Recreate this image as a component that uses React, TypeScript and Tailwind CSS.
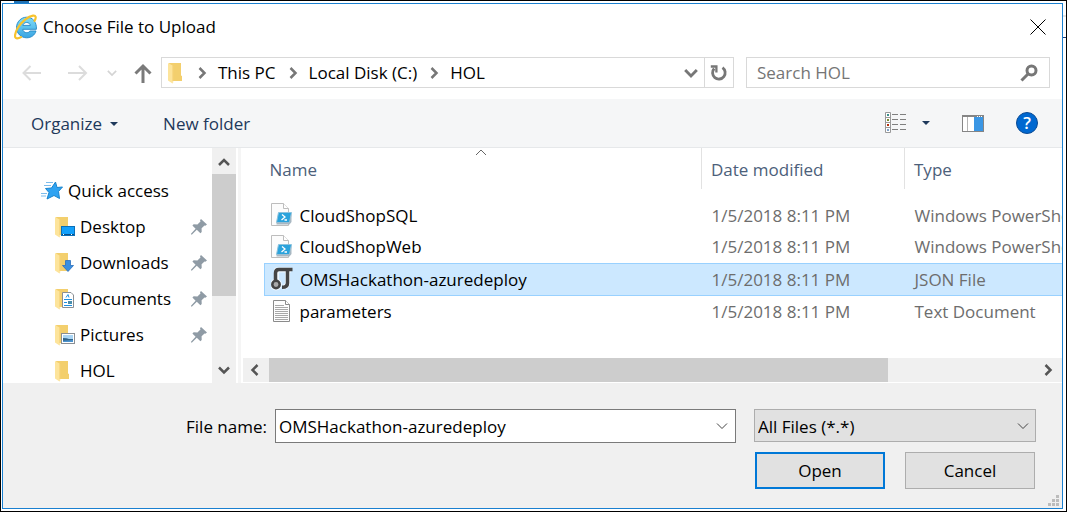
import type { ReactNode } from "react";

type Kind = "ps" | "json" | "txt";

const files: { name: string; date: string; type: string; kind: Kind; selected?: boolean }[] = [
  { name: "CloudShopSQL", date: "1/5/2018 8:11 PM", type: "Windows PowerShell Script", kind: "ps" },
  { name: "CloudShopWeb", date: "1/5/2018 8:11 PM", type: "Windows PowerShell Script", kind: "ps" },
  { name: "OMSHackathon-azuredeploy", date: "1/5/2018 8:11 PM", type: "JSON File", kind: "json", selected: true },
  { name: "parameters", date: "1/5/2018 8:11 PM", type: "Text Document", kind: "txt" },
];

function Chevron({ dir, className }: { dir: "up" | "down" | "left" | "right"; className: string }) {
  const d = {
    up: "M1 9 L6 4 L11 9",
    down: "M1 3.5 L6 8.5 L11 3.5",
    left: "M8.5 1 L3.5 6 L8.5 11",
    right: "M3.5 1 L8.5 6 L3.5 11",
  }[dir];
  return (
    <svg viewBox="0 0 12 12" fill="none" stroke="currentColor" className={className} aria-hidden="true">
      <path d={d} />
    </svg>
  );
}

function Caret() {
  return (
    <svg viewBox="0 0 8 4" className="h-1 w-2 shrink-0" aria-hidden="true">
      <path d="M0 0H8L4 4Z" fill="#1e395b" />
    </svg>
  );
}

function IeLogo() {
  return (
    <svg viewBox="0 0 24 26" className="h-[26px] w-6 shrink-0" aria-hidden="true">
      <defs>
        <linearGradient id="ie" x1="0" y1="0" x2="0" y2="1">
          <stop offset="0" stopColor="#7fdcf8" />
          <stop offset="1" stopColor="#3aa5e2" />
        </linearGradient>
      </defs>
      <path
        d="M12.600 3.200C7.200 3.200 2.500 7.800 2.500 13.500C2.500 19.500 7.200 23.800 12.700 23.800C17.200 23.800 20.800 21.200 22 17H15.800C15.200 18.200 14.200 18.700 12.800 18.700C10.500 18.700 9 17.300 8.800 15.300H22.400C22.900 8.200 18.800 3.200 12.600 3.200ZM8.900 11.400C9.200 9.700 10.600 8.500 12.700 8.500C14.700 8.500 16 9.700 16.300 11.400Z"
        fill="url(#ie)"
        stroke="#2186c4"
        strokeWidth="0.9"
      />
      <path
        d="M20.600 6.800C22.500 3.400 21.900 1.200 19 1.600C14.500 2.200 7.500 7.500 3.600 14.200C0.600 19.400 0 24.200 3 24.400C4.200 24.500 5.600 24 7 23.100"
        fill="none"
        stroke="#f7c32e"
        strokeWidth="2.200"
        strokeLinecap="round"
      />
    </svg>
  );
}

function Folder({ children }: { children?: ReactNode }) {
  return (
    <svg viewBox="0 0 21 22" className="h-[22px] w-[21px] shrink-0" aria-hidden="true">
      <path d="M1 1H13V13.500L14 14V19H4Z" fill="#f3cf6d" />
      <path d="M0 1L4.500 3.500V21.500L0 18.500Z" fill="#fde49b" />
      <path d="M4.500 3.500L5.200 4V20.500L4.500 21.500Z" fill="#f8d880" />
      {children}
    </svg>
  );
}

const desktopBadge = (
  <>
    <rect x="6.500" y="10.500" width="13" height="9" fill="#12a0fb" stroke="#0b6fb8" />
    <path d="M7 18.500H19" stroke="#0a4f88" />
    <path d="M8 18.500H9M16 18.500H17" stroke="#fff" />
  </>
);
const downloadBadge = <path d="M10.500 8.500H15.500V13.500H18.500L13 19.500L7.500 13.500H10.500Z" fill="#3a8fe0" stroke="#2a6fbd" strokeWidth="0.8" />;
const documentBadge = (
  <>
    <path d="M7.500 4.500H16L18.500 7V19.500H7.500Z" fill="#fff" stroke="#8a8f94" />
    <path d="M11 9.500L13 6.500L14 9.500M9 11.500H17M9 14.500H12M9 17.500H17" stroke="#1d8fe0" fill="none" />
    <rect x="13" y="13" width="4" height="3" fill="#4a8dab" />
  </>
);
const pictureBadge = (
  <>
    <rect x="6.500" y="9.500" width="13" height="10" fill="#fff" stroke="#8a8f94" />
    <rect x="8" y="11" width="10" height="7" fill="#a9d5f5" />
    <path d="M8 14Q12 14 14 15H18V18H8Z" fill="#33658a" />
    <path d="M8 16.800L18 16V18H8Z" fill="#4d94cf" />
  </>
);

function Pin() {
  return (
    <svg viewBox="0 0 16 16" className="h-4 w-4 shrink-0" aria-hidden="true">
      <path d="M10 0L16 5.500L14.300 6.800L13.500 6.400L10.600 9.300L10.700 13L9.400 14.200L5.800 10.800L1 15.500H0V14.700L4.600 9.700L1.400 6.500L2.700 5.200L6.400 5.500L9.500 2.500L9 1.200Z" fill="#8f9ba5" />
    </svg>
  );
}

const folders = [
  { name: "Desktop", badge: desktopBadge, pinned: true },
  { name: "Downloads", badge: downloadBadge, pinned: true },
  { name: "Documents", badge: documentBadge, pinned: true },
  { name: "Pictures", badge: pictureBadge, pinned: true },
  { name: "HOL", badge: null, pinned: false },
];

function FileIcon({ kind }: { kind: Kind }) {
  return (
    <svg viewBox="0 0 22 24" className="h-6 w-[22px] shrink-0" aria-hidden="true">
      {kind === "ps" && (
        <>
          <path d="M0.500 0.500H12.500L17.500 5.500V22.500H0.500Z" fill="#fcfcfc" stroke="#bdbdbd" />
          <path d="M12.500 0.500V5.500H17.500" fill="#fff" stroke="#bdbdbd" />
          <path d="M7.500 9.500H20.500L18.500 19.500H5.500Z" fill="#2ba3dc" stroke="#8cc3de" />
          <path d="M5.500 19.500H18.500L20.500 10V19L18.500 21.500H5.500Z" fill="#a8b7c2" />
          <path d="M11 11.500L14 14L10.500 17M13.500 17H16" fill="none" stroke="#fff" strokeWidth="1.300" />
        </>
      )}
      {kind === "json" && (
        <>
          <g fill="none" stroke="#fff" strokeWidth="5" opacity="0.7" strokeLinejoin="round">
            <path d="M5.500 13V3H20M16.500 3V15Q16.500 20 12 20" />
            <circle cx="5" cy="17.500" r="3.500" />
          </g>
          <g fill="none" stroke="#454545">
            <path d="M4.500 14V6Q4.500 2.500 8 2.500H21.500" strokeWidth="3.500" />
            <path d="M16.500 3V16Q16.500 20.300 11 20.300" strokeWidth="3.500" />
            <circle cx="5" cy="17.500" r="3.700" strokeWidth="2.500" fill="#aaa" />
          </g>
        </>
      )}
      {kind === "txt" && (
        <>
          <path d="M2.500 1.500H14.500L18.500 5.500V22.500H2.500Z" fill="#fdfdfd" stroke="#8b8b8b" />
          <path d="M14.500 1.500V5.500H18.500" fill="#fff" stroke="#8b8b8b" />
          <path d="M4 6.500H13M4 8.500H17M4 10.500H17M4 12.500H17M4 14.500H17M4 16.500H17M4 18.500H17M4 20.500H17" stroke="#a8a8a8" />
        </>
      )}
    </svg>
  );
}

export default function App() {
  return (
    <div className="relative h-screen border border-black bg-white py-[2px] pr-[3px] pl-px font-['Open_Sans','Noto_Sans',sans-serif] text-[17px] leading-6 text-black">
      <div className="absolute top-0 left-[13px] h-[2px] w-[15px] bg-[#2272b4]" aria-hidden="true" />
      <div className="absolute top-9 right-0 h-px w-[3px] bg-[#1f3f7a]" aria-hidden="true" />
      <div className="absolute top-[14px] right-0 h-[2px] w-[3px] bg-[#e5e5e5]" aria-hidden="true" />
      <div className="flex h-full flex-col border border-[#1a80d0] bg-white">
        <header className="flex h-11 items-center pt-[2px] pr-4 pl-[11px]">
          <IeLogo />
          <h1 className="ml-[5px] flex-1">Choose File to Upload</h1>
          <button aria-label="Close">
            <svg viewBox="0 0 16 16" className="h-4 w-4" stroke="#000" aria-hidden="true">
              <path d="M0.500 0.500L15.500 15.500M15.500 0.500L0.500 15.500" />
            </svg>
          </button>
        </header>

        <nav className="flex items-center pt-[9px] pr-3 pb-[11px] pl-[19px]">
          <button aria-label="Back" className="text-[#dcdcdc]">
            <svg viewBox="0 0 20 16" className="h-4 w-5" fill="none" stroke="currentColor" strokeWidth="2" aria-hidden="true">
              <path d="M19 8H1.500M8.500 1L1.500 8L8.500 15" />
            </svg>
          </button>
          <button aria-label="Forward" className="ml-[26px] text-[#dcdcdc]">
            <svg viewBox="0 0 20 16" className="h-4 w-5" fill="none" stroke="currentColor" strokeWidth="2" aria-hidden="true">
              <path d="M0 8H18M11 1L18 8L11 15" />
            </svg>
          </button>
          <button aria-label="Recent locations" className="ml-[19px] text-[#d4d4d4]">
            <Chevron dir="down" className="h-[10px] w-[10px] stroke-2" />
          </button>
          <button aria-label="Up" className="ml-[17px] text-[#7a7a7a]">
            <svg viewBox="0 0 18 20" className="h-5 w-[18px]" fill="none" stroke="currentColor" strokeWidth="3" aria-hidden="true">
              <path d="M9 20V3M1.500 10.500L9 3L16.500 10.500" />
            </svg>
          </button>
          <div className="ml-[9px] flex h-[31px] min-w-0 flex-1 items-center border border-[#d9d9d9] pl-[6px]">
            <Folder />
            <Chevron dir="right" className="ml-[7px] h-3 w-3 stroke-[2.5] text-[#777]" />
            <a href="#pc" className="ml-[10px]">This PC</a>
            <Chevron dir="right" className="ml-[11px] h-3 w-3 stroke-[2.5] text-[#777]" />
            <a href="#c" className="ml-[10px]">Local Disk (C:)</a>
            <Chevron dir="right" className="ml-[11px] h-3 w-3 stroke-[2.5] text-[#777]" />
            <a href="#hol" className="ml-[10px] flex-1">HOL</a>
            <button aria-label="Previous locations" className="mr-[6px] text-[#777]">
              <Chevron dir="down" className="h-[14px] w-[14px] stroke-[2.5]" />
            </button>
            <button aria-label="Refresh" className="flex h-full w-[29px] items-center justify-center border-l border-[#d9d9d9]">
              <svg viewBox="0 0 18 18" className="h-[18px] w-[18px]" fill="none" stroke="#777" strokeWidth="2.800" aria-hidden="true">
                <path d="M4.200 4.500A6.300 6.300 0 1 0 12.500 3.600" />
                <path d="M0.800 2.500H6.400V8.500" strokeWidth="2.300" />
              </svg>
            </button>
          </div>
          <div className="ml-3 flex h-[31px] w-[304px] items-center border border-[#d9d9d9] pr-[11px] pl-[10px]">
            <input aria-label="Search HOL" placeholder="Search HOL" className="min-w-0 flex-1 bg-transparent outline-none placeholder:text-[#757575]" />
            <svg viewBox="0 0 18 18" className="h-[18px] w-[18px]" fill="none" stroke="#777" strokeWidth="3" aria-hidden="true">
              <circle cx="11.500" cy="6.500" r="4.500" />
              <path d="M8 10L1.500 16.500" />
            </svg>
          </div>
        </nav>

        <div className="flex h-[49px] shrink-0 items-center border-b border-[#e6e8ea] bg-[#f5f6f7] pr-6 pl-7 text-[#1e395b]">
          <button className="flex items-center gap-2 pt-px">Organize <Caret /></button>
          <button className="ml-[45px] pt-px">New folder</button>
          <button aria-label="Change view" className="ml-auto flex items-center gap-4">
            <svg viewBox="0 0 22 22" className="h-[22px] w-[22px]" aria-hidden="true">
              <path d="M1.500 0.500H6.500V20.500H1.500ZM1.500 5.500H6.500M1.500 10.500H6.500M1.500 15.500H6.500" fill="#fff" stroke="#999" />
              <path d="M3 3H5" stroke="#3c8f8a" strokeWidth="2" />
              <path d="M3 8H5" stroke="#7a8c2f" strokeWidth="2" />
              <path d="M3 13H5" stroke="#b5310c" strokeWidth="2" />
              <path d="M3 18H5" stroke="#7fa3c8" strokeWidth="2" />
              <path d="M8 2.500H14M16 2.500H22M8 7.500H14M16 7.500H22M8 12.500H14M16 12.500H22M8 17.500H14M16 17.500H22" stroke="#7f7f7f" />
            </svg>
            <Caret />
          </button>
          <button aria-label="Preview pane" className="ml-8">
            <svg viewBox="0 0 22 17" className="h-[17px] w-[22px]" aria-hidden="true">
              <rect x="0.500" y="0.500" width="21" height="16" fill="#fff" stroke="#858585" />
              <path d="M1 1.500H21" stroke="#858585" />
              <path d="M15 1.500H16M17 1.500H18M19 1.500H20" stroke="#fff" />
              <path d="M5.500 2V16" stroke="#b5b5b5" />
              <rect x="12" y="2" width="9" height="14" fill="#3a96e4" />
            </svg>
          </button>
          <button aria-label="Help" className="ml-8 flex h-[22px] w-[22px] items-center justify-center rounded-full border border-[#0a4a94] bg-[#0068d0] font-semibold text-white">
            ?
          </button>
        </div>

        <main className="flex min-h-0 flex-1">
          <aside className="w-[209px] shrink-0 overflow-hidden pt-[25px]">
            <a href="#quick" className="flex h-9 items-center pl-[38px]">
              <svg viewBox="0 0 22 20" className="h-5 w-[22px] shrink-0" aria-hidden="true">
                <path d="M14.500 1L16 6.500L21.500 6L17.500 10.500L18.500 17.500L13 14.500L6 18L8 11.500L4.500 7.500L10.500 7Z" fill="#2fa3f2" stroke="#1a84cc" strokeLinejoin="round" />
                <path d="M5 1.500H12M3 4.500H10M0 12.500H6M0 15H5" stroke="#7cbcec" />
              </svg>
              <span className="ml-[5px]">Quick access</span>
            </a>
            {folders.map((f) => (
              <a key={f.name} href={`#${f.name}`} className="flex h-9 items-center pr-[5px] pl-[52px]">
                <Folder>{f.badge}</Folder>
                <span className="ml-1 flex-1">{f.name}</span>
                {f.pinned && <Pin />}
              </a>
            ))}
          </aside>
          <div className="flex w-6 shrink-0 flex-col items-center bg-[#f0f0f0] text-[#555]">
            <div className="flex h-[26px] items-center pt-px">
              <Chevron dir="up" className="h-3 w-3 stroke-[2.5]" />
            </div>
            <div className="w-full flex-[122] bg-[#cdcdcd]" />
            <div className="flex min-h-0 flex-[87] basis-0 items-end">
              <Chevron dir="down" className="mb-[7px] h-3 w-3 stroke-[2.5]" />
            </div>
          </div>
          <div className="ml-[2px] w-[3px] shrink-0 bg-[#f5f5f5]" />

          <section className="flex min-w-0 flex-1 flex-col">
            <div className="min-h-0 flex-1 overflow-hidden pl-[23px]">
              <table className="w-[115%] table-fixed border-collapse text-left whitespace-nowrap">
                <colgroup>
                  <col className="w-[437px]" />
                  <col className="w-[203px]" />
                  <col />
                </colgroup>
                <thead className="text-[#4c607a]">
                  <tr className="h-[41px]">
                    <th className="relative pt-[2px] pl-[5px] font-normal">
                      Name
                      <Chevron dir="up" className="absolute -top-[2px] left-[210px] h-3 w-3 text-[#666]" />
                    </th>
                    <th className="border-l border-[#e2e2e2] pt-[2px] pl-[9px] font-normal">Date modified</th>
                    <th className="border-l border-[#e2e2e2] pt-[2px] pl-[9px] font-normal">Type</th>
                  </tr>
                </thead>
                <tbody className="text-[#6d6d6d]">
                  <tr className="h-[10px]" aria-hidden="true"><td colSpan={3} /></tr>
                  {files.map((f) => (
                    <tr key={f.name} className={f.selected ? "h-8 border-y border-[#99d1ff] bg-[#cce8ff]" : "h-8"}>
                      <td className={f.selected ? "border-l border-[#99d1ff] p-0 pl-[6px]" : "p-0 pl-[6px]"}>
                        <div className="flex items-center gap-[7px] text-black">
                          <FileIcon kind={f.kind} />
                          <span className="pt-px">{f.name}</span>
                        </div>
                      </td>
                      <td className="p-0 pt-px pl-[10px]">{f.date}</td>
                      <td className="p-0 pt-px pl-[10px]">{f.type}</td>
                    </tr>
                  ))}
                </tbody>
              </table>
            </div>
            <div className="mb-px ml-[2px] flex h-6 shrink-0 items-center bg-[#f0f0f0] text-[#555]">
              <Chevron dir="left" className="ml-[6px] h-3 w-3 stroke-[2.5]" />
              <div className="ml-2 h-full flex-[619] bg-[#cdcdcd]" />
              <div className="flex flex-[174] justify-end">
                <Chevron dir="right" className="mr-2 h-3 w-3 stroke-[2.5]" />
              </div>
            </div>
          </section>
        </main>

        <footer className="flex h-[125px] shrink-0 justify-end bg-[#f0f0f0] pt-[26px]">
          <div className="flex flex-1 items-start">
            <label htmlFor="file-name" className="w-[264px] pt-[6px] text-right">File name:</label>
            <div className="ml-2 flex h-[34px] flex-1 items-center border border-[#7a7a7a] bg-white pr-[7px] pl-[3px]">
              <input id="file-name" defaultValue="OMSHackathon-azuredeploy" className="min-w-0 flex-1 bg-transparent pt-px outline-none" />
              <button aria-label="Show file names"><Chevron dir="down" className="h-3 w-3 text-[#444]" /></button>
            </div>
          </div>
          <div className="ml-[18px] w-[282px]">
            <div className="grid items-center">
              <select aria-label="File type" className="col-start-1 row-start-1 h-[33px] appearance-none border border-[#adadad] bg-[#e1e1e1] pt-[2px] pl-[3px]">
                <option>All Files (*.*)</option>
              </select>
              <Chevron dir="down" className="pointer-events-none col-start-1 row-start-1 mr-[7px] h-3 w-3 justify-self-end text-[#444]" />
            </div>
            <div className="mt-[10px] grid grid-cols-2 gap-5 px-px">
              <button className="h-[37px] border-2 border-[#0078d7] bg-[#e1e1e1] pt-px">Open</button>
              <button className="h-[37px] border border-[#adadad] bg-[#e1e1e1] pt-px">Cancel</button>
            </div>
          </div>
          <div className="flex w-[26px] items-end justify-end pr-[3px] pb-[2px]">
            <svg viewBox="0 0 11 11" className="h-[11px] w-[11px]" fill="#bcbcbc" aria-hidden="true">
              <path d="M8 0h3v3h-3zM8 4h3v3h-3zM8 8h3v3h-3zM4 4h3v3h-3zM4 8h3v3h-3zM0 8h3v3h-3z" />
            </svg>
          </div>
        </footer>
      </div>
    </div>
  );
}
